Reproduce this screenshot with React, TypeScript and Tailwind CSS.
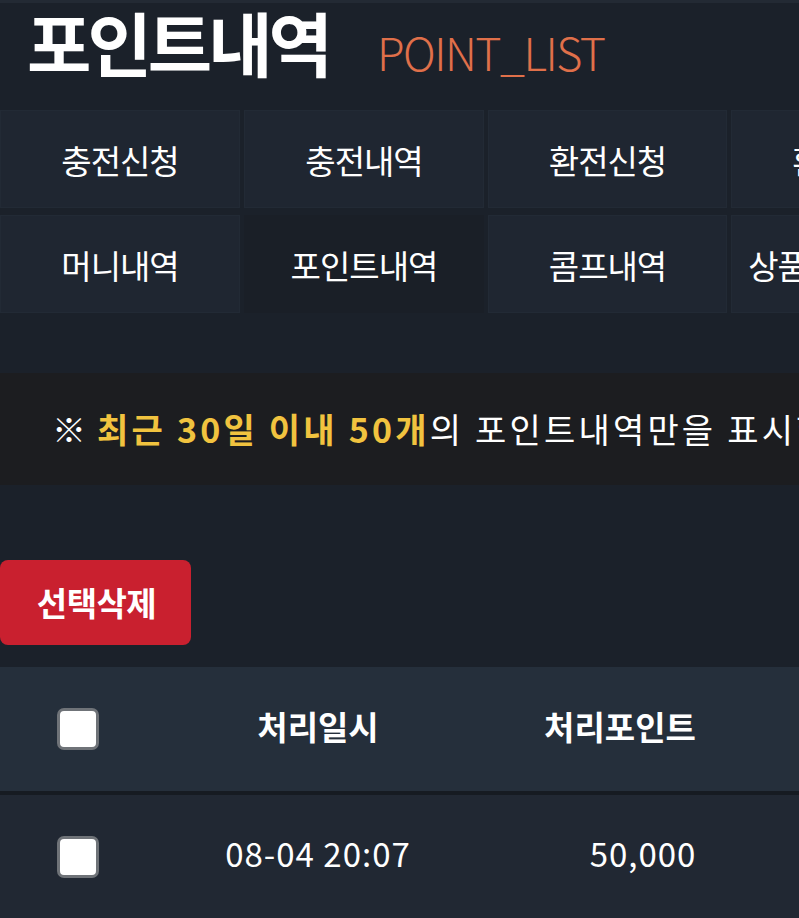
import React from "react";

const font = { fontFamily: '"Noto Sans CJK KR", "Noto Sans", sans-serif' };

const tabs = [
  ["충전신청", false],
  ["충전내역", false],
  ["환전신청", false],
  ["환전내역", false],
  ["머니내역", false],
  ["포인트내역", true],
  ["콤프내역", false],
  ["상품권교환내역", false],
] as const;

function Check() {
  return (
    <div className="w-[42px] h-[42px] rounded-[7px] bg-white border-[3px] border-[#6f7378]" />
  );
}

export default function App() {
  return (
    <div
      className="w-[799px] h-[918px] overflow-hidden bg-[#1b212a] text-white"
      style={font}
    >
      <div className="h-[3px] bg-[#232a34]" />
      <div className="h-[107px] flex items-start pl-[27px] gap-[48px]">
        <span className="text-[70px] font-bold leading-[1.1] tracking-[-4px] whitespace-nowrap">포인트내역</span>
        <span className="mt-[22px] text-[45px] font-light leading-[1.2] text-[#e0704a] tracking-[-1.5px] whitespace-nowrap">
          POINT_LIST
        </span>
      </div>
      <div className="w-[980px] grid grid-cols-[240px_240px_239px_240px] gap-x-[4px] gap-y-[7px]">
        {tabs.map(([label, active]) => (
          <div
            key={label}
            className={
              "h-[98px] flex items-center justify-center text-[33px] leading-none border whitespace-nowrap " +
              (active
                ? "bg-[#1a1f27] border-[#1a1f27]"
                : "bg-[#1f2631] border-[#222a35]")
            }
          >
            <span className="tracking-[-1px] pt-[2px]">{label}</span>
          </div>
        ))}
      </div>
      <div className="h-[60px]" />
      <div className="h-[112px] bg-[#1c1d20] flex items-center pl-[52px] whitespace-nowrap text-[34px] leading-none">
        <span className="mr-[11px]">※</span>
        <span className="font-bold text-[#f1c33f] tracking-[3.2px]">최근 30일 이내 50개</span>
        <span className="tracking-[3.2px]">의 포인트내역만을 표시합니다.</span>
      </div>
      <div className="h-[75px]" />
      <div className="w-[191px] h-[85px] rounded-[8px] bg-[#c9202f] flex items-center justify-center text-[33px] font-bold leading-none">
        <span className="tracking-[-0.5px] pl-[2px]">선택삭제</span>
      </div>
      <div className="h-[22px]" />
      <div className="w-[1000px] grid grid-cols-[156px_324px_280px_240px] h-[124px] bg-[#252f3b] items-center text-[33px] font-bold leading-none">
        <div className="flex justify-center">
          <Check />
        </div>
        <div className="text-center tracking-[0px] pb-[6px]">처리일시</div>
        <div className="text-center tracking-[0px] pb-[6px]">처리포인트</div>
        <div className="text-center tracking-[0px] pb-[6px]">처리내용</div>
      </div>
      <div className="h-[4px] bg-[#161b22]" />
      <div className="w-[1000px] grid grid-cols-[156px_324px_280px_240px] h-[124px] bg-[#212833] items-center text-[33px] leading-none">
        <div className="flex justify-center">
          <Check />
        </div>
        <div className="text-center tracking-[1px] pb-[8px]">08-04 20:07</div>
        <div className="text-center pl-[46px] tracking-[1px] pb-[8px]">50,000</div>
        <div className="text-center pb-[8px]">적립</div>
      </div>
    </div>
  );
}
